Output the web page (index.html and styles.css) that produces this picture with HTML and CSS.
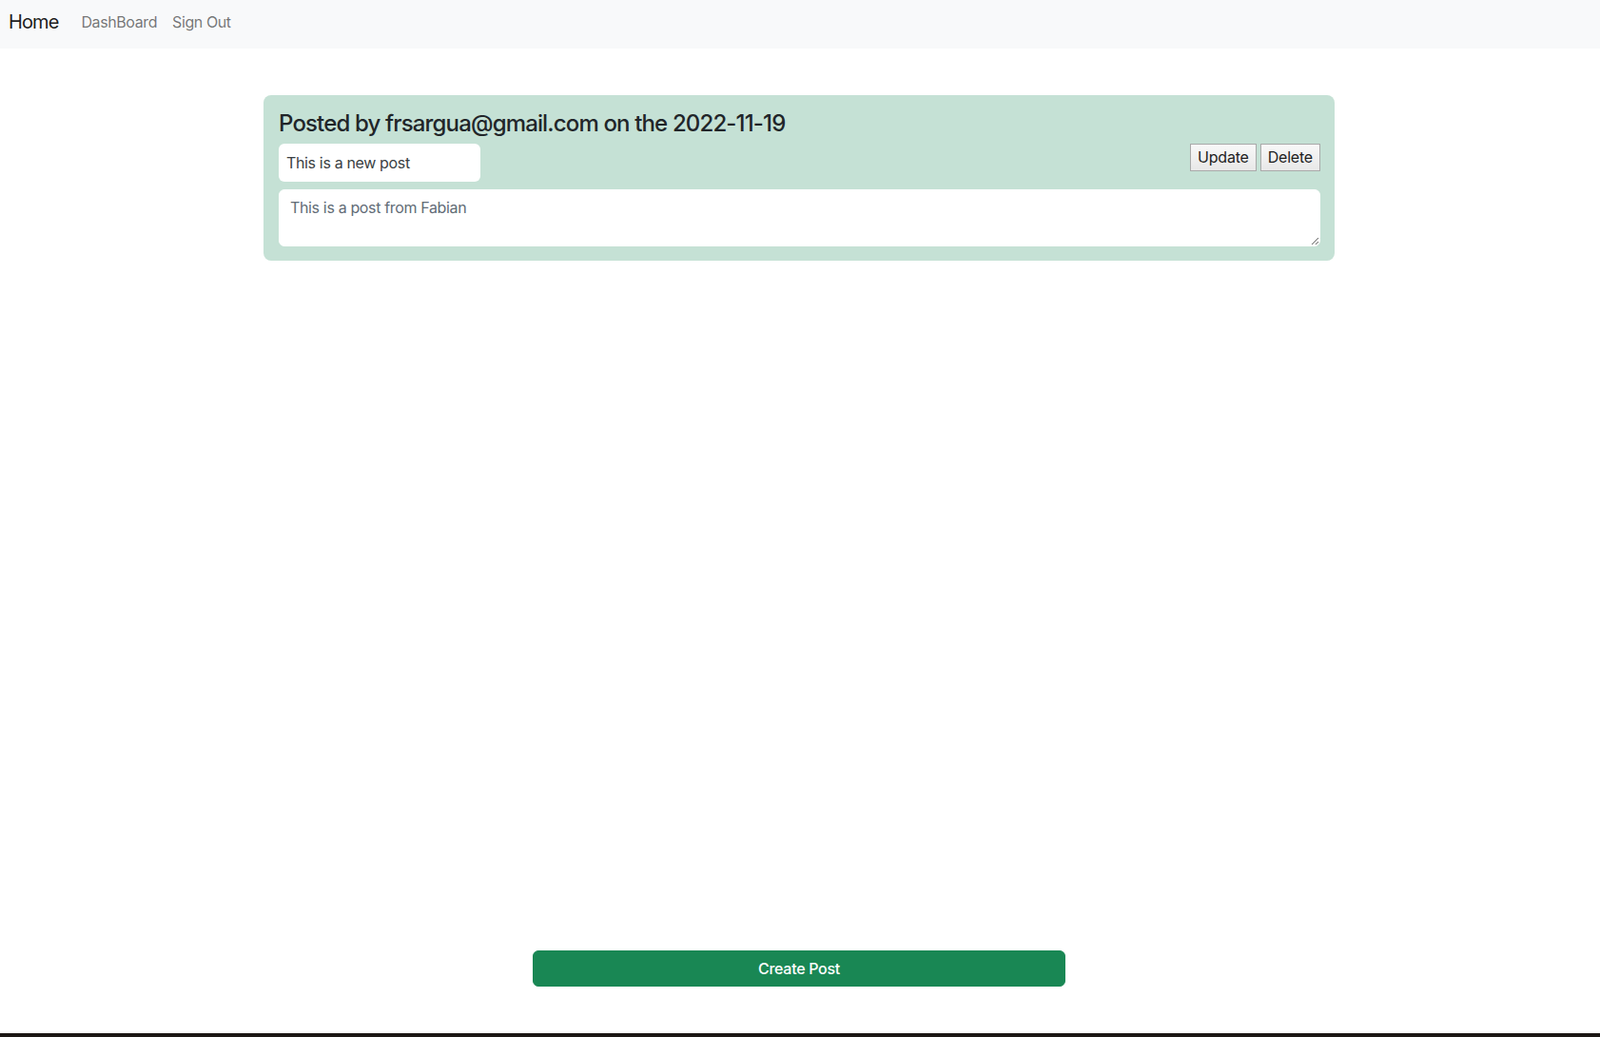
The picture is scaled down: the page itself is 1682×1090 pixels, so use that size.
FILE: index.html
```html
<!DOCTYPE html>
<html lang="en">
<head>
<meta charset="utf-8">
<title>Posts</title>
<link rel="stylesheet" href="styles.css">
</head>
<body>
<div class="page">
  <nav class="navbar">
    <a class="brand" href="#">Home</a>
    <a class="nav-link" href="#">DashBoard</a>
    <a class="nav-link" href="#">Sign Out</a>
  </nav>
  <main class="main">
    <section class="post-card">
      <h4 class="post-title">Posted by frsargua@gmail.com on the 2022-11-19</h4>
      <div class="post-row">
        <input class="title-input" type="text" value="This is a new post">
        <div class="actions">
          <button class="plain-btn" type="button">Update</button>
          <button class="plain-btn" type="button">Delete</button>
        </div>
      </div>
      <textarea class="body-input" placeholder="This is a post from Fabian"></textarea>
    </section>
  </main>
  <div class="footer-actions">
    <button class="create-btn" type="button">Create Post</button>
  </div>
  <div class="desk-strip"></div>
</div>
</body>
</html>
```
FILE: styles.css
```css
* { box-sizing: border-box; }
html, body {
  margin: 0;
  padding: 0;
  background: #ffffff;
}
body {
  font-family: Inter, "Noto Sans", "Liberation Sans", sans-serif;
  font-size: 16px;
  line-height: 1.5;
  color: #212529;
}
.page {
  min-height: 100vh;
  display: flex;
  flex-direction: column;
}
.navbar {
  height: 51px;
  background: #f8f9fa;
  display: flex;
  align-items: center;
  padding: 0 9px 6px 9px;
}
.brand {
  font-size: 20px;
  line-height: 30px;
  color: rgba(0, 0, 0, 0.9);
  text-decoration: none;
  margin-right: 16px;
  letter-spacing: -0.9px;
}
.nav-link {
  font-size: 16px;
  line-height: 24px;
  padding: 0 8px;
  color: rgba(0, 0, 0, 0.55);
  text-decoration: none;
  letter-spacing: -0.4px;
}
.main {
  flex: 1;
  padding-top: 49px;
  display: flex;
  flex-direction: column;
  align-items: center;
}
.post-card {
  width: 1126px;
  margin-right: 2px;
  background: #c5e1d5;
  border-radius: 8px;
  padding: 16px 15px 15px 16px;
}
.post-title {
  margin: 0 0 6px 0;
  font-size: 24px;
  font-weight: 500;
  line-height: 28.8px;
  color: #212529;
  letter-spacing: -0.85px;
}
.post-row {
  display: flex;
  justify-content: space-between;
  align-items: flex-start;
}
.title-input {
  width: 212px;
  height: 40px;
  border: none;
  border-radius: 6px;
  background: #ffffff;
  padding: 0 8px;
  font-family: inherit;
  font-size: 16px;
  color: #3a3f44;
  outline: none;
  letter-spacing: -0.35px;
}
.actions {
  display: flex;
  gap: 4px;
}
.plain-btn {
  appearance: none;
  height: 29px;
  padding: 0 7px;
  border: 1px solid #a9a9a9;
  border-radius: 0;
  background: linear-gradient(#f8f8f8, #e8e8e8);
  font-family: inherit;
  font-size: 16px;
  color: #1e1e1e;
  letter-spacing: -0.2px;
}
.body-input {
  display: block;
  width: 100%;
  height: 60px;
  margin-top: 8px;
  border: 1px solid #ffffff;
  border-radius: 6px;
  padding: 6px 11px;
  font-family: inherit;
  font-size: 16px;
  line-height: 24px;
  background: #ffffff;
  outline: none;
  letter-spacing: -0.35px;
}
.body-input::placeholder {
  color: #626c76;
  opacity: 1;
}
.footer-actions {
  display: flex;
  justify-content: center;
  padding-bottom: 49px;
  padding-right: 2px;
}
.create-btn {
  width: 560px;
  height: 38px;
  border: 1px solid #198754;
  border-radius: 6px;
  background: #198754;
  color: #ffffff;
  font-family: inherit;
  font-size: 16px;
  font-weight: 500;
  letter-spacing: -0.3px;
}
.desk-strip {
  height: 4px;
  background: #1c1714;
}
```
